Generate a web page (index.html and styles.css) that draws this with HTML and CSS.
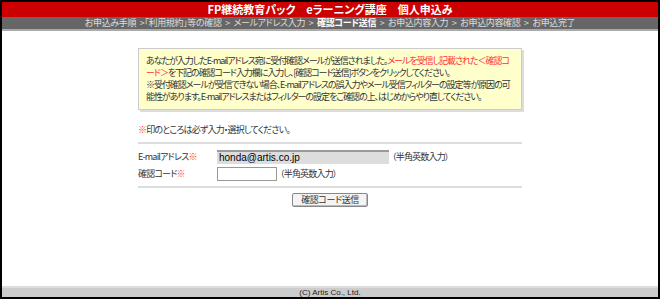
FILE: index.html
```html
<!DOCTYPE html>
<html lang="ja">

<head>
    <meta charset="UTF-8">
    <title>FP継続教育パック eラーニング講座 個人申込み</title>
    <link rel="stylesheet" href="styles.css">
</head>

<body>
    <div class="frame">
        <div class="title-bar">FP継続教育パック　eラーニング講座　個人申込み</div>
        <div class="step-bar">
            お申込み手順 &gt;「利用規約」等の確認 &gt; メールアドレス入力 &gt; <b>確認コード送信</b> &gt; お申込内容入力 &gt; お申込内容確認 &gt; お申込完了
        </div>
        <div class="content">
            <div class="notice">
                あなたが入力したE-mailアドレス宛に受付確認メールが送信されました。<span class="red">メールを受信し記載された＜確認コード＞</span>を下記の確認コード入力欄に入力し、[確認コード送信]ボタンをクリックしてください。<br>
                ※受付確認メールが受信できない場合、E-mailアドレスの誤入力やメール受信フィルターの設定等が原因の可能性があります。E-mailアドレスまたはフィルターの設定をご確認の上、はじめからやり直してください。
            </div>
            <div class="required-note"><span class="red">※</span>印のところは必ず入力・選択してください。</div>
            <div class="form-table">
                <div class="form-row">
                    <div class="form-label">E-mailアドレス<span class="red">※</span></div>
                    <input class="email-input" type="text" value="honda@artis.co.jp" readonly>
                    <span class="hint">（半角英数入力）</span>
                </div>
                <div class="form-row">
                    <div class="form-label">確認コード<span class="red">※</span></div>
                    <input class="code-input" type="text">
                    <span class="hint">（半角英数入力）</span>
                </div>
            </div>
            <div class="actions">
                <button class="send-button">確認コード送信</button>
            </div>
        </div>
        <div class="footer">(C) Artis Co., Ltd.</div>
    </div>
</body>

</html>
```

FILE: styles.css
```css
body {
    margin: 0;
    padding: 0;
    background: #000;
    font-family: "Noto Sans CJK JP", sans-serif;
    font-feature-settings: "palt";
    color: #333;
}

.frame {
    height: 299px;
    box-sizing: border-box;
    border: 2px solid #000;
    display: flex;
    flex-direction: column;
    background: white;
}

.title-bar {
    height: 15px;
    background: #cc0000;
    color: white;
    font-size: 11px;
    font-weight: bold;
    line-height: 15px;
    text-align: center;
}

.step-bar {
    height: 12px;
    background: #666;
    color: #ddd;
    font-size: 9px;
    letter-spacing: -0.35px;
    word-spacing: 2px;
    line-height: 12px;
    text-align: center;
    border-bottom: 2px solid #aaa;
    white-space: nowrap;
}

.step-bar b {
    color: white;
}

.content {
    flex: 1;
    width: 384px;
    margin: 0 auto;
    padding-top: 17px;
    letter-spacing: -0.8px;
}

.notice {
    background: #ffffcc;
    border: 1px solid #ccc;
    box-shadow: 2px 2px 0 #ddd;
    padding: 6px 10px 6px 7px;
    font-size: 9px;
    letter-spacing: -1.05px;
    line-height: 12px;
    color: #333;
}

.red {
    color: #ff3333;
}

.required-note {
    font-size: 9px;
    line-height: 12px;
    margin: 14px 0 6px;
}

.form-table {
    border-top: 2px solid #ddd;
    border-bottom: 2px solid #ddd;
    padding: 4px 0 4px;
}

.form-row {
    display: flex;
    align-items: center;
    height: 17px;
    font-size: 9px;
}

.form-label {
    width: 79px;
}

.email-input,
.code-input {
    box-sizing: border-box;
    height: 14px;
    margin: 0;
    padding: 0 2px;
    font-family: "Liberation Sans", sans-serif;
    font-size: 10px;
    letter-spacing: 0;
    color: #000;
}

.email-input {
    width: 172px;
    background: #ddd;
    border: none;
    border-top: 2px solid #999;
}

.code-input {
    width: 60px;
    background: white;
    border: 1px solid #999;
}

.hint {
    margin-left: 3px;
}

.actions {
    display: flex;
    justify-content: center;
    padding-top: 5px;
}

.send-button {
    width: 76px;
    height: 14px;
    padding: 0;
    font-family: "Noto Sans CJK JP", sans-serif;
    font-feature-settings: "palt";
    font-size: 9px;
    letter-spacing: -0.4px;
    line-height: 12px;
    color: #333;
    background: #f4f4f4;
    border: 1px solid #888;
    border-radius: 2px;
    box-shadow: inset -1px -1px 0 #bbb;
}

.footer {
    height: 9px;
    background: #ccc;
    border-top: 2px solid #ddd;
    font-family: "Liberation Sans", sans-serif;
    font-size: 8px;
    line-height: 9px;
    text-align: center;
    color: #222;
}
```
